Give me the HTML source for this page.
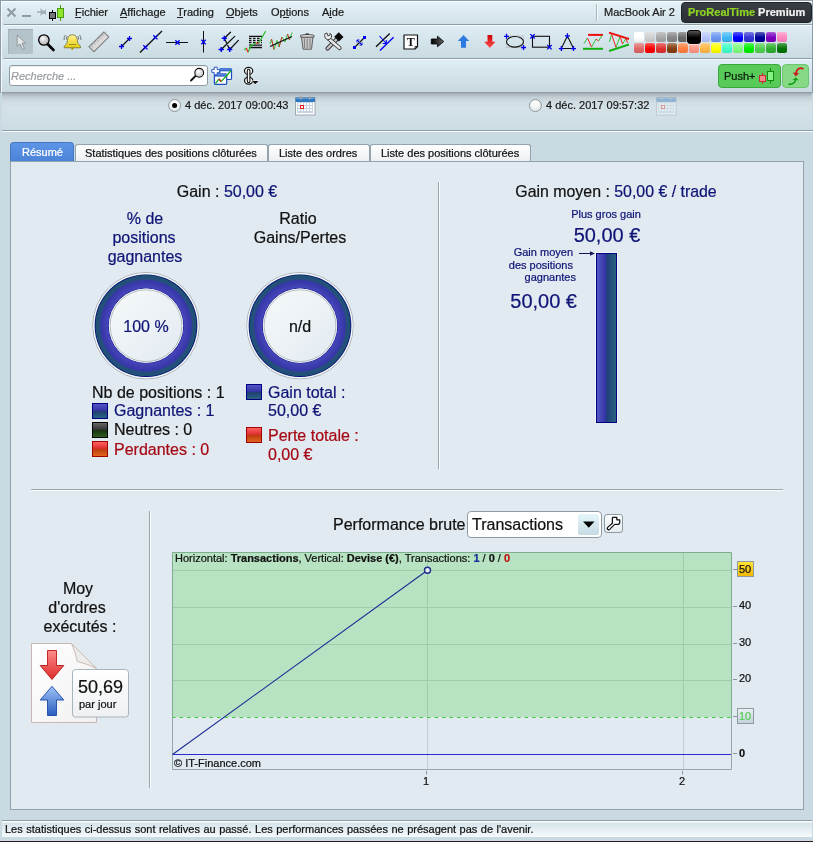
<!DOCTYPE html>
<html><head><meta charset="utf-8">
<style>
*{margin:0;padding:0;box-sizing:border-box}
html,body{width:813px;height:842px;overflow:hidden}
body{position:relative;background:#c9dae2;font-family:"Liberation Sans",sans-serif;color:#111}
.a{position:absolute}
.t{position:absolute;white-space:nowrap;line-height:1;will-change:transform;-webkit-text-stroke:0.22px currentColor}
.nv{color:#17237e}
.rd{color:#b0141a}
svg{position:absolute;overflow:visible}
</style></head><body>

<!-- window frame -->
<div class="a" style="left:0;top:0;width:813px;height:1px;background:#8d9ca4"></div>
<div class="a" style="left:0;top:0;width:1px;height:93px;background:#8d9ca4"></div>
<div class="a" style="left:1px;top:1px;width:1px;height:91px;background:#f6fafc"></div>

<!-- menubar -->
<div class="a" style="left:2px;top:1px;width:811px;height:25px;background:linear-gradient(#e5f3f9,#d0dfe5)"></div>
<div class="a" style="left:1px;top:1px;width:812px;height:1px;background:#fbfeff"></div>
<div class="a" style="left:4px;top:24px;width:809px;height:1px;background:#8e9ea5"></div>
<div class="a" style="left:4px;top:25px;width:809px;height:1px;background:#f4fafc"></div>

<!-- toolbar -->
<div class="a" style="left:2px;top:26px;width:811px;height:34px;background:linear-gradient(#deedf4,#c9d9e0)"></div>
<div class="a" style="left:4px;top:58px;width:809px;height:1px;background:#8e9ea5"></div>
<div class="a" style="left:4px;top:59px;width:809px;height:1px;background:#f4fafc"></div>

<!-- search row -->
<div class="a" style="left:2px;top:60px;width:811px;height:32px;background:linear-gradient(#dfeef5,#c8d8df)"></div>
<div class="a" style="left:2px;top:92px;width:810px;height:38px;background:linear-gradient(#8a979d 0px,#aab6bc 2px,#c2ced4 5px,#d0dde3 10px,#d4e2e8 16px,#d0dfe5 28px,#cbdbe2 38px)"></div>



<!-- menubar content -->
<svg style="left:0;top:0" width="70" height="24">
 <g stroke="#8e9ba1" stroke-width="2" fill="none"><path d="M7.5 8.5 L15.5 16.5 M15.5 8.5 L7.5 16.5"/></g>
 <rect x="22" y="15" width="9" height="2" fill="#8e9ba1"/>
 <path d="M37 11.2 H41 V12.8 H37 Z M40.5 8 L42.5 10.5 H45 L46 9 V15.8 L45 14 H42.5 L40.5 15.8 Z" fill="#a4aeb3"/>
 <line x1="52.5" y1="10" x2="52.5" y2="21" stroke="#000" stroke-width="1"/>
 <rect x="49.5" y="12.5" width="6" height="6" fill="#74787c" stroke="#000" stroke-width="1"/>
 <line x1="60.5" y1="5" x2="60.5" y2="21" stroke="#4a9c12" stroke-width="1"/>
 <rect x="57.5" y="8.5" width="6" height="9" fill="#8fe52c" stroke="#4a9c12" stroke-width="1"/>
</svg>
<div class="t" style="left:75px;top:7.1px;font-size:11px;color:#1a1a1a">Fichier</div>
<div class="t" style="left:120px;top:7.1px;font-size:11px;color:#1a1a1a">Affichage</div>
<div class="t" style="left:177px;top:7.1px;font-size:11px;color:#1a1a1a">Trading</div>
<div class="t" style="left:226px;top:7.1px;font-size:11px;color:#1a1a1a">Objets</div>
<div class="t" style="left:271px;top:7.1px;font-size:11px;color:#1a1a1a">Options</div>
<div class="t" style="left:322px;top:7.1px;font-size:11px;color:#1a1a1a">Aide</div>
<div class="a" style="left:75px;top:17px;width:6px;height:1px;background:#222"></div>
<div class="a" style="left:120px;top:17px;width:7px;height:1px;background:#222"></div>
<div class="a" style="left:177px;top:17px;width:6px;height:1px;background:#222"></div>
<div class="a" style="left:226px;top:17px;width:8px;height:1px;background:#222"></div>
<div class="a" style="left:283px;top:17px;width:6px;height:1px;background:#222"></div>
<div class="a" style="left:329px;top:17px;width:3px;height:1px;background:#222"></div>
<div class="a" style="left:596px;top:4px;width:1px;height:17px;background:#a9b6bc"></div>
<div class="a" style="left:597px;top:4px;width:1px;height:17px;background:#f4f9fb"></div>
<div class="t" style="left:604px;top:7.4px;font-size:11px;color:#1a1a1a">MacBook Air 2</div>
<div class="a" style="left:681px;top:2px;width:131px;height:21px;border-radius:4px;background:linear-gradient(#3a3f45,#2a2e33);border:1px solid #1e2226"></div>
<div class="t" style="left:688px;top:6.6px;font-size:11px;font-weight:bold;color:#8fd424">ProRealTime <span style="color:#f2f2f2">Premium</span></div>


<!-- toolbar icons -->
<div class="a" style="left:8px;top:29px;width:25px;height:25px;background:#b4c3ca;border-top:1px solid #a0afb6;border-left:1px solid #a6b5bc"></div>
<svg style="left:0;top:0" width="813" height="60">
 <defs>
  <radialGradient id="mg" cx="0.4" cy="0.35" r="0.7"><stop offset="0" stop-color="#fafafa"/><stop offset="1" stop-color="#a8a8a8"/></radialGradient>
  <linearGradient id="bellg" x1="0" y1="0" x2="0" y2="1"><stop offset="0" stop-color="#fff59a"/><stop offset="1" stop-color="#e8cc00"/></linearGradient>
  <linearGradient id="arrg" x1="0" y1="0" x2="1" y2="0"><stop offset="0" stop-color="#000"/><stop offset="1" stop-color="#666"/></linearGradient>
  <linearGradient id="redg" x1="0" y1="0" x2="0" y2="1"><stop offset="0" stop-color="#c00"/><stop offset="1" stop-color="#ff5050"/></linearGradient>
 </defs>
 <!-- cursor -->
 <path d="M17.2 35 L17.2 46.5 L20 44 L22.5 49.5 L24.5 48.5 L22 43.2 L25.5 43 Z" fill="#e4e6e8" stroke="#8a9094" stroke-width="0.9" stroke-linejoin="round"/>
 <!-- magnifier -->
 <line x1="47.5" y1="44" x2="53.5" y2="50" stroke="#000" stroke-width="2.6" stroke-linecap="round"/>
 <circle cx="43.9" cy="40" r="5.2" fill="url(#mg)" stroke="#000" stroke-width="1.3"/>
 <!-- bell -->
 <g stroke="#6a6a6a" stroke-width="0.9" fill="none"><path d="M65.5 35 Q63.5 37 64.2 40 M67.3 36 Q66 37.5 66.5 39.5 M79.5 35 Q81.5 37 80.8 40 M77.7 36 Q79 37.5 78.5 39.5"/></g>
 <path d="M72.4 34.8 Q77.3 35 77.3 40.5 Q77.3 44 80.5 46.3 L80.5 47.8 L64.3 47.8 L64.3 46.3 Q67.5 44 67.5 40.5 Q67.5 35 72.4 34.8 Z" fill="url(#bellg)" stroke="#6b6b3a" stroke-width="0.8"/>
 <line x1="69" y1="44.5" x2="76" y2="44.5" stroke="#6b6b3a" stroke-width="0.7"/>
 <rect x="71.3" y="47.8" width="2" height="1.8" fill="#a09000"/>
 <!-- ruler -->
 <g transform="translate(98.9,41.9) rotate(-45)">
  <rect x="-10.5" y="-3.5" width="21" height="7" fill="#dadada" stroke="#7a7a7a" stroke-width="1"/>
  <g stroke="#8a8a8a" stroke-width="0.7"><path d="M-8 -3.5 V-0.5 M-6 -3.5 V-1.5 M-4 -3.5 V-0.5 M-2 -3.5 V-1.5 M0 -3.5 V-0.5 M2 -3.5 V-1.5 M4 -3.5 V-0.5 M6 -3.5 V-1.5 M8 -3.5 V-0.5"/></g>
 </g>
 <!-- line segment -->
 <line x1="121.5" y1="46.5" x2="129.5" y2="38.5" stroke="#111" stroke-width="1.3"/>
 <g stroke="#0000ee" stroke-width="1.3"><path d="M119 46.5 H124 M121.5 44 V49 M127 38.5 H132 M129.5 36 V41"/></g>
 <!-- long line -->
 <line x1="140" y1="52.5" x2="162" y2="31" stroke="#111" stroke-width="1.35"/>
 <g stroke="#0000ee" stroke-width="1.3"><path d="M143.3 45.2 L147.5 49.4 M143.3 49.4 L147.5 45.2 M153.3 35.2 L157.5 39.4 M153.3 39.4 L157.5 35.2"/></g>
 <!-- horizontal line -->
 <line x1="166" y1="42.5" x2="188" y2="42.5" stroke="#111" stroke-width="1"/>
 <g stroke="#0000ee" stroke-width="1.3"><path d="M175.4 40.3 L179.6 44.7 M175.4 44.7 L179.6 40.3"/></g>
 <!-- vertical line -->
 <line x1="203.5" y1="31" x2="203.5" y2="52.5" stroke="#111" stroke-width="1"/>
 <g stroke="#0000ee" stroke-width="1.3"><path d="M201.3 39.8 L205.7 44.2 M201.3 44.2 L205.7 39.8"/></g>
 <!-- pitchfork -->
 <g stroke="#111" stroke-width="1.3" stroke-linecap="round"><path d="M224.3 38.3 L230.5 32.3 M221.2 49.5 L234.7 36.4 M229.7 49.5 L238.4 40.4 M224.3 38.3 L229.7 49.5"/></g>
 <g stroke="#0000ee" stroke-width="1.4"><path d="M221.7 38.3 H226.9 M224.3 35.7 V40.9 M218.6 49.5 H223.8 M221.2 46.9 V52.1 M227.1 49.5 H232.3 M229.7 46.9 V52.1"/></g>
 <!-- fib -->
 <g stroke="#111" stroke-width="1.3"><path d="M249 36.4 H262 M249 45.2 H262 M249 47.5 H262"/></g>
 <g stroke="#111" stroke-width="1.3" stroke-dasharray="2.5 1.5"><path d="M249 38.4 H262 M249 40.5 H262 M249 42.7 H262"/></g>
 <path d="M244.3 50 L246.3 48 M248 52.3 L251.2 45.5 L256 43 M258.5 43.3 L265.7 31.1" fill="none" stroke="#2ec02e" stroke-width="1.2"/>
 <path d="M246.3 48 L248 52.3 M256 43 L258.5 43.3" fill="none" stroke="#ee2020" stroke-width="1.2"/>
 <!-- wave -->
 <path d="M270 44 L271.5 39 L274 49.5 L277 40.5 L279 47 L282 37 L285 42 L287.5 34 L289.5 40 L292 32.5" fill="none" stroke="#30c030" stroke-width="1"/>
 <path d="M271.5 39 L274 49.5 M279 47 L282 37 M287.5 34 L289.5 40" fill="none" stroke="#e03030" stroke-width="1"/>
 <line x1="270" y1="46.5" x2="292" y2="36.5" stroke="#111" stroke-width="1.35"/>
 <!-- trash -->
 <path d="M301.5 37 L303 49.2 L311.5 49.2 L313 37 Z" fill="#c8c8c8" stroke="#505050" stroke-width="0.9"/>
 <g stroke="#707070" stroke-width="0.8"><path d="M304.5 38.5 V48 M307.2 38.5 V48.2 M310 38.5 V48"/></g>
 <path d="M300.5 35.3 Q307.2 33 314 35.3 L314 37.2 L300.5 37.2 Z" fill="#d8d8d8" stroke="#505050" stroke-width="0.9"/>
 <rect x="305.7" y="33.5" width="3" height="1.5" fill="#333"/>
 <!-- tools -->
 <line x1="336.5" y1="39.5" x2="327.5" y2="48.5" stroke="#333" stroke-width="4.2" stroke-linecap="round"/>
 <line x1="336.5" y1="39.5" x2="327.5" y2="48.5" stroke="#c8c8c8" stroke-width="2.4" stroke-linecap="round"/>
 <line x1="329" y1="39" x2="339.5" y2="48" stroke="#333" stroke-width="4.2" stroke-linecap="round"/>
 <line x1="329" y1="39" x2="339.5" y2="48" stroke="#e8e8e8" stroke-width="2.4" stroke-linecap="round"/>
 <path d="M324.5 35.5 Q324.5 33 327 33 L327.8 35.8 L330 35.2 L330 33.2 Q332.2 34.2 331.5 37.3 Q330.5 40 327.5 39.8 Q324.8 39 324.5 35.5 Z" fill="#e8e8e8" stroke="#333" stroke-width="0.9"/>
 <path d="M334.2 36.8 L338.8 32.2 L343.5 36.9 L338.9 41.5 Z" fill="#0a0a0a"/>
 <!-- blue squares line -->
 <line x1="354.5" y1="47.5" x2="364.5" y2="37.5" stroke="#111" stroke-width="1.3"/>
 <rect x="353" y="46" width="3" height="3" fill="#0000ee"/>
 <rect x="363" y="36" width="3" height="3" fill="#0000ee"/>
 <g stroke="#0000ee" stroke-width="1"><path d="M357 40 L362 45 M357 40 H359.5 M357 40 V42.5 M362 45 H359.5 M362 45 V42.5"/></g>
 <!-- parallel lines -->
 <line x1="376" y1="46.7" x2="389.7" y2="33.4" stroke="#111" stroke-width="1.35"/>
 <line x1="380" y1="50.6" x2="393.6" y2="37.3" stroke="#0000ee" stroke-width="1.35"/>
 <g stroke="#0000ee" stroke-width="1.1" fill="none"><path d="M379.5 36 L386.3 43.5 M386.3 43.5 L386.3 40 M386.3 43.5 L382.7 43.5"/></g>
 <!-- text T -->
 <path d="M404 35 H417.5 V46.5 L415 49 H404 Z" fill="#fff" stroke="#111" stroke-width="1.2" stroke-linejoin="round"/>
 <path d="M415 49 V46.5 H417.5" fill="none" stroke="#111" stroke-width="0.8"/>
 <text x="410.8" y="45.8" font-family="Liberation Serif" font-weight="bold" font-size="12" text-anchor="middle" fill="#111">T</text>
 <!-- black arrow -->
 <path d="M431.3 39 H437.5 V36.2 L443.8 41.5 L437.5 46.8 V44 H431.3 Z" fill="url(#arrg)" stroke="#000" stroke-width="0.8"/>
 <!-- blue arrow up -->
 <path d="M463.5 35 L469.2 41 H466 V47.8 H461 V41 H457.8 Z" fill="#2d7ae0"/>
 <!-- red arrow down -->
 <path d="M487.5 35 H492.3 V41.8 H495.4 L489.9 47.9 L484.2 41.8 H487.5 Z" fill="url(#redg)"/>
 <!-- ellipse -->
 <rect x="506.5" y="36" width="17" height="11.5" fill="none" stroke="#b0b0b0" stroke-width="0.6"/>
 <ellipse cx="515" cy="41.8" rx="8.5" ry="5.3" fill="none" stroke="#111" stroke-width="1.1"/>
 <g stroke="#0000ee" stroke-width="1.3"><path d="M504 36.3 H509 M506.5 33.8 V38.8 M521 47.5 H526 M523.5 45 V50"/></g>
 <!-- rectangle -->
 <rect x="532.5" y="36.3" width="17" height="10.9" fill="none" stroke="#111" stroke-width="1.1"/>
 <g stroke="#0000ee" stroke-width="1.3"><path d="M530.3 34.1 L534.7 38.5 M530.3 38.5 L534.7 34.1 M547.3 45 L551.7 49.4 M547.3 49.4 L551.7 45"/></g>
 <!-- triangle -->
 <path d="M567.4 36 L561.3 48.5 H573.5 Z" fill="none" stroke="#111" stroke-width="1.1"/>
 <g stroke="#0000ee" stroke-width="1.3"><path d="M564.9 35.8 H569.9 M567.4 33.3 V38.3 M558.8 48.6 H563.8 M561.3 46.1 V51.1 M571 48.6 H576 M573.5 46.1 V51.1"/></g>
 <!-- channel rect -->
 <rect x="588" y="33.9" width="15" height="2" fill="#ee1010"/>
 <rect x="583" y="47.8" width="20" height="2" fill="#10b010"/>
 <path d="M584 43.5 L587.5 38 M591.5 47 L596 39 M598.5 41 L602 35.5" stroke="#30c030" stroke-width="1" fill="none"/>
 <path d="M587.5 38 L591.5 47 M596 39 L598.5 41" stroke="#ee2020" stroke-width="1" fill="none"/>
 <!-- channel triangle -->
 <path d="M609 32.6 L629 39" stroke="#ee1010" stroke-width="2"/>
 <path d="M609 51 L629 44.5" stroke="#10b010" stroke-width="2"/>
 <path d="M609.5 42 L611.5 34 M616 47.5 L620 36.5 M622.5 44 L626 38.5" stroke="#30c030" stroke-width="1" fill="none"/>
 <path d="M611.5 34 L616 47.5 M620 36.5 L622.5 44 M626 38.5 L627.5 43" stroke="#ee2020" stroke-width="1" fill="none"/>
</svg>

<!-- palette -->
<div class="a" style="left:634px;top:32px;width:10px;height:10px;border-radius:2px;background:linear-gradient(#ffffff,#ffffff 55%,#eaeaea)"></div>
<div class="a" style="left:645px;top:32px;width:10px;height:10px;border-radius:2px;background:linear-gradient(#e0e0e0,#d0d0d0 55%,#bfbfbf)"></div>
<div class="a" style="left:656px;top:32px;width:10px;height:10px;border-radius:2px;background:linear-gradient(#c6c6c6,#a8a8a8 55%,#9a9a9a)"></div>
<div class="a" style="left:667px;top:32px;width:10px;height:10px;border-radius:2px;background:linear-gradient(#b1b1b1,#888888 55%,#7d7d7d)"></div>
<div class="a" style="left:678px;top:32px;width:10px;height:10px;border-radius:2px;background:linear-gradient(#9e9e9e,#6a6a6a 55%,#616161)"></div>
<div class="a" style="left:700px;top:32px;width:10px;height:10px;border-radius:2px;background:linear-gradient(#d0d9ff,#b8c6ff 55%,#a9b6ea)"></div>
<div class="a" style="left:711px;top:32px;width:10px;height:10px;border-radius:2px;background:linear-gradient(#9fbcf5,#6c98f0 55%,#638bdc)"></div>
<div class="a" style="left:722px;top:32px;width:10px;height:10px;border-radius:2px;background:linear-gradient(#82d0fa,#40b8f8 55%,#3aa9e4)"></div>
<div class="a" style="left:733px;top:32px;width:10px;height:10px;border-radius:2px;background:linear-gradient(#5959ff,#0000ff 55%,#0000ea)"></div>
<div class="a" style="left:744px;top:32px;width:10px;height:10px;border-radius:2px;background:linear-gradient(#7c7ce3,#3636d4 55%,#3131c3)"></div>
<div class="a" style="left:755px;top:32px;width:10px;height:10px;border-radius:2px;background:linear-gradient(#5959bc,#000098 55%,#00008b)"></div>
<div class="a" style="left:766px;top:32px;width:10px;height:10px;border-radius:2px;background:linear-gradient(#ab59d6,#7e00c0 55%,#7300b0)"></div>
<div class="a" style="left:777px;top:32px;width:10px;height:10px;border-radius:2px;background:linear-gradient(#ffb1d6,#ff88c0 55%,#ea7db0)"></div>
<div class="a" style="left:634px;top:43px;width:10px;height:10px;border-radius:2px;background:linear-gradient(#ea9c9c,#e06868 55%,#ce5f5f)"></div>
<div class="a" style="left:645px;top:43px;width:10px;height:10px;border-radius:2px;background:linear-gradient(#ff5959,#ff0000 55%,#ea0000)"></div>
<div class="a" style="left:656px;top:43px;width:10px;height:10px;border-radius:2px;background:linear-gradient(#ea7979,#e03232 55%,#ce2e2e)"></div>
<div class="a" style="left:667px;top:43px;width:10px;height:10px;border-radius:2px;background:linear-gradient(#af8263,#844010 55%,#793a0e)"></div>
<div class="a" style="left:678px;top:43px;width:10px;height:10px;border-radius:2px;background:linear-gradient(#ffac82,#ff8040 55%,#ea753a)"></div>
<div class="a" style="left:689px;top:43px;width:10px;height:10px;border-radius:2px;background:linear-gradient(#ffbcb1,#ff9888 55%,#ea8b7d)"></div>
<div class="a" style="left:700px;top:43px;width:10px;height:10px;border-radius:2px;background:linear-gradient(#ffd088,#ffb848 55%,#eaa942)"></div>
<div class="a" style="left:711px;top:43px;width:10px;height:10px;border-radius:2px;background:linear-gradient(#ffff59,#ffff00 55%,#eaea00)"></div>
<div class="a" style="left:722px;top:43px;width:10px;height:10px;border-radius:2px;background:linear-gradient(#82ffdb,#40ffc8 55%,#3aeab8)"></div>
<div class="a" style="left:733px;top:43px;width:10px;height:10px;border-radius:2px;background:linear-gradient(#acffac,#80ff80 55%,#75ea75)"></div>
<div class="a" style="left:744px;top:43px;width:10px;height:10px;border-radius:2px;background:linear-gradient(#59f559,#00f000 55%,#00dc00)"></div>
<div class="a" style="left:755px;top:43px;width:10px;height:10px;border-radius:2px;background:linear-gradient(#8de08d,#50d050 55%,#49bf49)"></div>
<div class="a" style="left:766px;top:43px;width:10px;height:10px;border-radius:2px;background:linear-gradient(#78cb78,#30b030 55%,#2ca12c)"></div>
<div class="a" style="left:777px;top:43px;width:10px;height:10px;border-radius:2px;background:linear-gradient(#59a459,#007400 55%,#006a00)"></div>
<div class="a" style="left:687px;top:30px;width:14px;height:14px;border-radius:3px;background:linear-gradient(#555,#000 55%,#000);border:1px solid #000;box-shadow:0 0 0 1px rgba(255,255,255,.5)"></div>

<!-- search row content -->
<div class="a" style="left:9px;top:65px;width:199px;height:21px;border-radius:3px;background:#fff;border:1px solid #8e9ba2;box-shadow:inset 0 1px 1px rgba(0,0,0,.08)"></div>
<div class="t" style="left:11px;top:71px;font-size:11px;font-style:italic;color:#999ca0">Recherche ...</div>
<svg style="left:0;top:0" width="813" height="95">
 <defs>
  <radialGradient id="mg2" cx="0.4" cy="0.35" r="0.7"><stop offset="0" stop-color="#ffffff"/><stop offset="1" stop-color="#c0c0c0"/></radialGradient>
  <linearGradient id="wtb" x1="0" y1="0" x2="0" y2="1"><stop offset="0" stop-color="#6d9ae8"/><stop offset="1" stop-color="#1d4fc0"/></linearGradient>
 </defs>
 <line x1="191" y1="80.5" x2="196" y2="75.5" stroke="#111" stroke-width="1.8" stroke-linecap="round"/>
 <circle cx="199.2" cy="72.8" r="4.4" fill="url(#mg2)" stroke="#111" stroke-width="1.1"/>
 <!-- windows icon -->
 <rect x="219.8" y="68.5" width="11.7" height="11" rx="1" fill="#fff" stroke="#1a4dc0" stroke-width="1.2"/>
 <rect x="219.8" y="68.5" width="11.7" height="2.8" fill="url(#wtb)"/>
 <rect x="214.4" y="73.8" width="12.3" height="10.5" rx="1" fill="#fff" stroke="#1a4dc0" stroke-width="1.2"/>
 <rect x="214.4" y="73.8" width="12.3" height="2.8" fill="url(#wtb)"/>
 <path d="M215.5 83.5 L219 79 L221 81.5 L226 76.5 M226 76.5 L231 70.5" fill="none" stroke="#20b020" stroke-width="1.3"/>
 <path d="M219 79 L221 81.5" stroke="#e02020" stroke-width="1.3"/>
 <path d="M214.2 67.2 H217.2 V69.6 H219.6 V72.4 H217.2 V74.8 H214.2 V72.4 H211.8 V69.6 H214.2 Z" fill="#fff" stroke="#1a4dc0" stroke-width="0.9"/>
 <!-- chain -->
 <ellipse cx="248.6" cy="70.9" rx="4.1" ry="3.5" fill="#fff" stroke="#111" stroke-width="1.25"/>
 <ellipse cx="248.6" cy="80.6" rx="4.1" ry="3.5" fill="#fff" stroke="#111" stroke-width="1.25"/>
 <rect x="247.3" y="69.3" width="2.6" height="13.2" rx="1.3" fill="#fff" stroke="#111" stroke-width="1.1"/>
 
 <path d="M251.3 80.4 H259.2 L255.25 84.8 Z" fill="#fff"/>
 <path d="M252 81 H258.5 L255.25 84.2 Z" fill="#111"/>
</svg>
<div class="a" style="left:718px;top:64px;width:63px;height:24px;border-radius:4px;background:#58ca58;border:1px solid #3aa83a"></div>
<div class="t" style="left:724px;top:70.5px;font-size:11px;color:#0a1a0a">Push+</div>
<svg style="left:0;top:0" width="813" height="95">
 <line x1="762.5" y1="73" x2="762.5" y2="84" stroke="#c8283a" stroke-width="1"/>
 <rect x="759.5" y="75.5" width="6" height="6" fill="#f88c8c" stroke="#c8283a" stroke-width="1"/>
 <line x1="770.5" y1="68" x2="770.5" y2="83.5" stroke="#0e8a0e" stroke-width="1"/>
 <rect x="767.5" y="71.5" width="6" height="9" fill="#86f286" stroke="#0e8a0e" stroke-width="1"/>
</svg>
<div class="a" style="left:782px;top:64px;width:27px;height:24px;border-radius:4px;background:#86da86;border:1px solid #6cc46c"></div>
<svg style="left:0;top:0" width="813" height="95">
 <path d="M802.8 68.6 C799.5 67.2 796.3 69.5 795.9 73.2" fill="none" stroke="#d81818" stroke-width="1.9" stroke-linecap="round"/>
 <path d="M792.8 72.4 L799.2 72.9 L795.7 76.6 Z" fill="#c42020"/>
 <path d="M789 84.4 C792.6 84.3 795.3 82.2 795.8 79" fill="none" stroke="#10a010" stroke-width="1.6" stroke-linecap="round"/>
 <path d="M792.6 80 L798.6 80.2 L795.8 77.6 Z" fill="#129a12"/>
</svg>
<div class="a" style="left:812px;top:0;width:1px;height:93px;background:#8d9ca4"></div>

<!-- separator under dates -->
<div class="a" style="left:2px;top:130px;width:811px;height:1px;background:#8e9ea5"></div>
<div class="a" style="left:2px;top:131px;width:811px;height:1px;background:#f6fbfd"></div>


<!-- dates row -->
<svg style="left:0;top:0" width="813" height="170">
 <defs>
  <radialGradient id="rad" cx="0.5" cy="0.3" r="0.7"><stop offset="0" stop-color="#ffffff"/><stop offset="1" stop-color="#e4e8ea"/></radialGradient>
 </defs>
 <circle cx="174.6" cy="105.5" r="6" fill="url(#rad)" stroke="#8a979d" stroke-width="1"/>
 <circle cx="174.6" cy="105.5" r="2.5" fill="#000"/>
 <circle cx="535.4" cy="105.5" r="6" fill="url(#rad)" stroke="#8a979d" stroke-width="1"/>
 <!-- calendar 1 -->
 <g transform="translate(295,95)">
  <rect x="0.5" y="2.5" width="19.5" height="17.5" fill="#fff" stroke="#a0a8ac" stroke-width="1"/>
  <rect x="0.5" y="2.5" width="19.5" height="4.5" fill="#2f78c0"/><rect x="1" y="3" width="18.5" height="1" fill="#5c9ad4"/>
  <rect x="5" y="0.5" width="1.6" height="4" fill="#a8a8a8"/>
  <rect x="14" y="0.5" width="1.6" height="4" fill="#a8a8a8"/>
  <rect x="2" y="7" width="16" height="11" fill="#c4d4e2"/>
  <g fill="#fff"><rect x="3" y="8" width="2" height="2"/><rect x="3" y="11" width="2" height="2"/><rect x="3" y="14" width="2" height="2"/><rect x="6" y="8" width="2" height="2"/><rect x="6" y="11" width="2" height="2"/><rect x="6" y="14" width="2" height="2"/><rect x="9" y="8" width="2" height="2"/><rect x="9" y="11" width="2" height="2"/><rect x="9" y="14" width="2" height="2"/><rect x="12" y="8" width="2" height="2"/><rect x="12" y="11" width="2" height="2"/><rect x="12" y="14" width="2" height="2"/><rect x="15" y="8" width="2" height="2"/><rect x="15" y="11" width="2" height="2"/><rect x="15" y="14" width="2" height="2"/></g>
  <rect x="5.5" y="10.5" width="3" height="3" fill="#fff" stroke="#e82020" stroke-width="1"/>
 </g>
 <g transform="translate(656,95)" opacity="0.38">
  <rect x="0.5" y="2.5" width="19.5" height="17.5" fill="#fff" stroke="#a0a8ac" stroke-width="1"/>
  <rect x="0.5" y="2.5" width="19.5" height="4.5" fill="#2f78c0"/><rect x="1" y="3" width="18.5" height="1" fill="#5c9ad4"/>
  <rect x="5" y="0.5" width="1.6" height="4" fill="#a8a8a8"/>
  <rect x="14" y="0.5" width="1.6" height="4" fill="#a8a8a8"/>
  <rect x="2" y="7" width="16" height="11" fill="#c4d4e2"/>
  <g fill="#fff"><rect x="3" y="8" width="2" height="2"/><rect x="3" y="11" width="2" height="2"/><rect x="3" y="14" width="2" height="2"/><rect x="6" y="8" width="2" height="2"/><rect x="6" y="11" width="2" height="2"/><rect x="6" y="14" width="2" height="2"/><rect x="9" y="8" width="2" height="2"/><rect x="9" y="11" width="2" height="2"/><rect x="9" y="14" width="2" height="2"/><rect x="12" y="8" width="2" height="2"/><rect x="12" y="11" width="2" height="2"/><rect x="12" y="14" width="2" height="2"/><rect x="15" y="8" width="2" height="2"/><rect x="15" y="11" width="2" height="2"/><rect x="15" y="14" width="2" height="2"/></g>
  <rect x="5.5" y="10.5" width="3" height="3" fill="#fff" stroke="#e82020" stroke-width="1"/>
 </g>
</svg>
<div class="t" style="left:185px;top:100px;font-size:11px;color:#1a1a1a">4 déc. 2017 09:00:43</div>
<div class="t" style="left:546px;top:100px;font-size:11px;color:#1a1a1a">4 déc. 2017 09:57:32</div>

<!-- tabs -->
<div class="a" style="left:10px;top:142px;width:64px;height:20px;border-radius:4px 4px 0 0;background:linear-gradient(#5e95e6,#4a82d8);border:1px solid #4476c4;border-bottom:none"></div>
<div class="t" style="left:22px;top:146.5px;font-size:11px;color:#fff">Résumé</div>
<div class="a" style="left:75px;top:144px;width:193px;height:17px;border-radius:3px 3px 0 0;background:linear-gradient(#ffffff,#eceff1);border:1px solid #93a3ab;border-bottom:none"></div>
<div class="t" style="left:85px;top:147.5px;font-size:11px;color:#111">Statistiques des positions clôturées</div>
<div class="a" style="left:268px;top:144px;width:102px;height:17px;border-radius:3px 3px 0 0;background:linear-gradient(#ffffff,#eceff1);border:1px solid #93a3ab;border-bottom:none"></div>
<div class="t" style="left:279px;top:147.5px;font-size:11px;color:#111">Liste des ordres</div>
<div class="a" style="left:370px;top:144px;width:161px;height:17px;border-radius:3px 3px 0 0;background:linear-gradient(#ffffff,#eceff1);border:1px solid #93a3ab;border-bottom:none"></div>
<div class="t" style="left:381px;top:147.5px;font-size:11px;color:#111">Liste des positions clôturées</div>

<!-- panel -->
<div class="a" style="left:10px;top:161px;width:794px;height:649px;background:#e2eaf1;border:1px solid #93a3ab"></div>

<!-- upper content -->
<div class="t" style="left:77px;width:300px;text-align:center;top:184.00px;font-size:16px;color:#111">Gain : <span style="color:#0f1476">50,00 €</span></div>
<div class="t" style="left:-5.5px;width:300px;text-align:center;top:211.00px;font-size:16px;color:#0f1476">% de</div>
<div class="t" style="left:-6px;width:300px;text-align:center;top:230.00px;font-size:16px;color:#0f1476">positions</div>
<div class="t" style="left:-5px;width:300px;text-align:center;top:249.00px;font-size:16px;color:#0f1476">gagnantes</div>
<div class="t" style="left:147.60000000000002px;width:300px;text-align:center;top:211.00px;font-size:16px;color:#111">Ratio</div>
<div class="t" style="left:150px;width:300px;text-align:center;top:230.00px;font-size:16px;color:#111">Gains/Pertes</div>
<svg style="left:0;top:0" width="813" height="842">
 <defs>
  <radialGradient id="ring" gradientUnits="userSpaceOnUse" cx="0" cy="0" r="50.6">
   <stop offset="0.73" stop-color="#000078"/>
   <stop offset="0.75" stop-color="#4646ba"/>
   <stop offset="0.89" stop-color="#3636a8"/>
   <stop offset="0.915" stop-color="#284c82"/>
   <stop offset="1" stop-color="#1c5470"/>
  </radialGradient>
  <linearGradient id="hole" x1="0" y1="0" x2="1" y2="1"><stop offset="0" stop-color="#f6f9fb"/><stop offset="1" stop-color="#e2eaf0"/></linearGradient>
 </defs>
 <g id="dn" transform="translate(146,325.7)">
  <circle r="53.2" fill="none" stroke="#a0aaaf" stroke-width="0.9"/>
  <circle r="52.3" fill="none" stroke="#fafcfd" stroke-width="0.9"/>
  <circle r="51.3" fill="#000078"/>
  <circle r="50.6" fill="url(#ring)"/>
  <circle r="37.1" fill="url(#hole)"/>
  <circle r="36.7" fill="none" stroke="#fbfdfe" stroke-width="0.8"/>
  <circle r="35.9" fill="none" stroke="#a4aeb3" stroke-width="0.8"/>
 </g>
 <g transform="translate(300,325.7)">
  <circle r="53.2" fill="none" stroke="#a0aaaf" stroke-width="0.9"/>
  <circle r="52.3" fill="none" stroke="#fafcfd" stroke-width="0.9"/>
  <circle r="51.3" fill="#000078"/>
  <circle r="50.6" fill="url(#ring)"/>
  <circle r="37.1" fill="url(#hole)"/>
  <circle r="36.7" fill="none" stroke="#fbfdfe" stroke-width="0.8"/>
  <circle r="35.9" fill="none" stroke="#a4aeb3" stroke-width="0.8"/>
 </g>
</svg>
<div class="t" style="left:-4.300000000000011px;width:300px;text-align:center;top:319.00px;font-size:16px;color:#0f1476">100 %</div>
<div class="t" style="left:150px;width:300px;text-align:center;top:319.00px;font-size:16px;color:#111">n/d</div>
<div class="t" style="left:92px;top:385.00px;font-size:16px;color:#111">Nb de positions : 1</div>
<div class="a" style="left:92px;top:403px;width:16px;height:16px;background:linear-gradient(#5454c4,#3232a2 50%,#203e70 50%,#2a6282);border:1px solid #000080"></div>
<div class="a" style="left:92px;top:422px;width:16px;height:16px;background:linear-gradient(#666,#303030 50%,#183010 50%,#30601e);border:1px solid #000"></div>
<div class="a" style="left:92px;top:441px;width:16px;height:16px;background:linear-gradient(#ff6060,#d82a2a 50%,#bc3a0e 50%,#e0641c);border:1px solid #a00000"></div>
<div class="t" style="left:114px;top:403.00px;font-size:16px;color:#0f1476">Gagnantes : 1</div>
<div class="t" style="left:114px;top:422.00px;font-size:16px;color:#111">Neutres : 0</div>
<div class="t" style="left:114px;top:442.00px;font-size:16px;color:#a50a14">Perdantes : 0</div>
<div class="a" style="left:246px;top:384px;width:16px;height:16px;background:linear-gradient(#5454c4,#3232a2 50%,#203e70 50%,#2a6282);border:1px solid #000080"></div>
<div class="a" style="left:246px;top:427px;width:16px;height:16px;background:linear-gradient(#ff6060,#d82a2a 50%,#bc3a0e 50%,#e0641c);border:1px solid #a00000"></div>
<div class="t" style="left:268px;top:385.00px;font-size:16px;color:#0f1476">Gain total :</div>
<div class="t" style="left:268px;top:403.00px;font-size:16px;color:#0f1476">50,00 €</div>
<div class="t" style="left:268px;top:428.00px;font-size:16px;color:#a50a14">Perte totale :</div>
<div class="t" style="left:268px;top:447.00px;font-size:16px;color:#a50a14">0,00 €</div>
<div class="a" style="left:438px;top:182px;width:1px;height:287px;background:#98a6ad"></div>
<div class="a" style="left:439px;top:182px;width:1px;height:287px;background:#fafdff"></div>
<div class="a" style="left:31px;top:489px;width:752px;height:1px;background:#98a6ad"></div>
<div class="a" style="left:31px;top:490px;width:752px;height:1px;background:#fafdff"></div>
<div class="t" style="left:466px;width:300px;text-align:center;top:184.00px;font-size:15.9px;color:#111">Gain moyen : <span style="color:#0f1476">50,00 € / trade</span></div>
<div class="t" style="left:456.29999999999995px;width:300px;text-align:center;top:209.00px;font-size:11px;color:#0f1476">Plus gros gain</div>
<div class="t" style="left:457px;width:300px;text-align:center;top:225.00px;font-size:20px;color:#0f1476">50,00 €</div>
<div class="t" style="left:273px;width:300px;text-align:right;top:247.00px;font-size:11px;color:#0f1476">Gain moyen</div>
<div class="t" style="left:273px;width:300px;text-align:right;top:260.00px;font-size:11px;color:#0f1476">des positions</div>
<div class="t" style="left:275.5px;width:300px;text-align:right;top:272.00px;font-size:11px;color:#0f1476">gagnantes</div>
<div class="t" style="left:276.5px;width:300px;text-align:right;top:291.00px;font-size:20px;color:#0f1476">50,00 €</div>
<svg style="left:0;top:0" width="813" height="842">
 <line x1="579" y1="253.5" x2="593" y2="253.5" stroke="#10185a" stroke-width="1"/>
 <path d="M595 253.5 L590 251.3 L590 255.7 Z" fill="#10185a"/>
</svg>
<div class="a" style="left:595px;top:252px;width:23px;height:171px;background:rgba(255,255,255,.6)"></div>
<div class="a" style="left:596px;top:252.5px;width:21px;height:170px;border:1px solid #000080;background:linear-gradient(90deg,#5058c4,#3434a4 45%,#1e3c7c 46%,#2a6280)"></div>
<!-- /upper -->
<!-- lower content -->
<div class="t" style="left:-72.2px;width:300px;text-align:center;top:581px;font-size:16px;color:#111">Moy</div>
<div class="t" style="left:-72.8px;width:300px;text-align:center;top:600px;font-size:16px;color:#111">d'ordres</div>
<div class="t" style="left:-69.8px;width:300px;text-align:center;top:619px;font-size:16px;color:#111">exécutés :</div>
<div class="a" style="left:149px;top:511px;width:1px;height:277px;background:#98a6ad"></div>
<div class="a" style="left:150px;top:511px;width:1px;height:277px;background:#fafdff"></div>
<svg style="left:0;top:0" width="813" height="842">
 <defs>
  <linearGradient id="docg" x1="0" y1="0" x2="1" y2="1"><stop offset="0" stop-color="#ffffff"/><stop offset="1" stop-color="#f0f0f0"/></linearGradient>
  <linearGradient id="dred" x1="0" y1="0" x2="0" y2="1"><stop offset="0" stop-color="#ff8c8c"/><stop offset="1" stop-color="#dc2a2a"/></linearGradient>
  <linearGradient id="dblue" x1="0" y1="0" x2="0" y2="1"><stop offset="0" stop-color="#a0c4f6"/><stop offset="1" stop-color="#2a5cc0"/></linearGradient>
  <linearGradient id="lbl" x1="0" y1="0" x2="0" y2="1"><stop offset="0" stop-color="#ffffff"/><stop offset="1" stop-color="#eef0f2"/></linearGradient>
 </defs>
 <path d="M31.5 643.5 H71.5 L96.5 668.5 V722.5 H31.5 Z" fill="url(#docg)" stroke="#c8b8b0" stroke-width="1"/>
 <path d="M71.5 643.5 Q75.5 652 77.3 661.5 Q87 663.5 96.5 668.5 Z" fill="#ececec" stroke="#c8b4ac" stroke-width="0.9" stroke-linejoin="round"/>
 <path d="M47.5 650.5 H56.5 V665.5 H63.8 L52 679.5 L40.2 665.5 H47.5 Z" fill="url(#dred)" stroke="#b81818" stroke-width="0.9"/>
 <path d="M52 686.3 L63.8 700 H56.5 V715.5 H47.5 V700 H40.2 Z" fill="url(#dblue)" stroke="#1a48a8" stroke-width="0.9"/>
 <rect x="72.5" y="669.5" width="56" height="47.5" rx="3" fill="url(#lbl)" stroke="#a8b4bc" stroke-width="1"/>
</svg>
<div class="t" style="left:78px;top:678px;font-size:18px;color:#111">50,69</div>
<div class="t" style="left:78.5px;top:699px;font-size:11px;color:#111">par jour</div>
<div class="t" style="left:333px;top:517px;font-size:16px;color:#111">Performance brute</div>
<div class="a" style="left:467px;top:511px;width:135px;height:27px;border-radius:4px;background:#fff;border:1px solid #8e9ba2"></div>
<div class="t" style="left:472px;top:517px;font-size:16px;color:#111">Transactions</div>
<div class="a" style="left:578px;top:514px;width:21px;height:21px;border-radius:2px;background:linear-gradient(#e4f6fa,#c6dae3)"></div>
<svg style="left:0;top:0" width="813" height="842">
 <path d="M583 521.5 H594.5 L588.75 527.8 Z" fill="#000"/>
</svg>
<div class="a" style="left:604px;top:514px;width:19px;height:19px;border-radius:3px;background:linear-gradient(#fdfefe,#e4eaee);border:1px solid #8e9ba2"></div>
<svg style="left:0;top:0" width="813" height="842">
 <path d="M612.4 523.2 V517.9 L613 517.3 H616.8 V519.8 H619.7 V523 L618.6 524.4 H614.6 L609.9 529.1 Q608.6 530.3 607.6 529.3 Q606.7 528.3 607.9 527.1 Z" fill="#fff" stroke="#111" stroke-width="1.25" stroke-linejoin="round"/>
</svg>
<svg style="left:0;top:0" width="813" height="842">
<rect x="172" y="552" width="559" height="165" fill="#b8e3c3"/>
<rect x="172" y="717" width="559" height="52" fill="#e2eaf1"/>
<line x1="172" y1="570.5" x2="731" y2="570.5" stroke="#9fccab" stroke-width="1"/>
<line x1="172" y1="607.5" x2="731" y2="607.5" stroke="#9fccab" stroke-width="1"/>
<line x1="172" y1="644.5" x2="731" y2="644.5" stroke="#9fccab" stroke-width="1"/>
<line x1="172" y1="680.5" x2="731" y2="680.5" stroke="#9fccab" stroke-width="1"/>
<line x1="427.5" y1="552" x2="427.5" y2="717" stroke="#9fccab" stroke-width="1"/>
<line x1="427.5" y1="717" x2="427.5" y2="769" stroke="#c2ccd2" stroke-width="1"/>
<line x1="683.5" y1="552" x2="683.5" y2="717" stroke="#9fccab" stroke-width="1"/>
<line x1="683.5" y1="717" x2="683.5" y2="769" stroke="#c2ccd2" stroke-width="1"/>
<line x1="172" y1="717.5" x2="731" y2="717.5" stroke="#40cc40" stroke-width="1" stroke-dasharray="3.6 3.9"/>
<line x1="172" y1="754.5" x2="731" y2="754.5" stroke="#2a2ad0" stroke-width="1.2"/>
<path d="M172.5 717 V552.5 H731.5 V717" fill="none" stroke="#7fae8e" stroke-width="1"/>
<path d="M172.5 717 V769.5 H731.5 V717" fill="none" stroke="#95a5ad" stroke-width="1"/>
<line x1="172.5" y1="754.5" x2="427.5" y2="570.3" stroke="#1e2c96" stroke-width="1.1"/>
<circle cx="427.5" cy="570.3" r="3" fill="#e4ecf2" stroke="#1c2a88" stroke-width="1.4"/>
<line x1="733" y1="569.5" x2="737" y2="569.5" stroke="#8a959b" stroke-width="1"/>
<line x1="733" y1="606.5" x2="737" y2="606.5" stroke="#8a959b" stroke-width="1"/>
<line x1="733" y1="643.5" x2="737" y2="643.5" stroke="#8a959b" stroke-width="1"/>
<line x1="733" y1="679.5" x2="737" y2="679.5" stroke="#8a959b" stroke-width="1"/>
<line x1="733" y1="716.5" x2="737" y2="716.5" stroke="#8a959b" stroke-width="1"/>
<line x1="733" y1="753.5" x2="737" y2="753.5" stroke="#8a959b" stroke-width="1"/>
<line x1="426.5" y1="771" x2="426.5" y2="774.5" stroke="#8a959b" stroke-width="1"/>
<line x1="682.5" y1="771" x2="682.5" y2="774.5" stroke="#8a959b" stroke-width="1"/>
</svg>
<div class="t" style="left:175px;top:553px;font-size:11px;color:#111">Horizontal: <b>Transactions</b>, Vertical: <b>Devise (€)</b>, Transactions: <b style="color:#1a2a9a">1</b> / <b>0</b> / <b style="color:#c01010">0</b></div>
<div class="t" style="left:174.3px;top:758px;font-size:11px;color:#111">© IT-Finance.com</div>
<div class="a" style="left:737px;top:561px;width:17px;height:16px;background:linear-gradient(#ffe43a,#f2b800);border:1px solid #8e9aa2"></div>
<div class="t" style="left:738.6px;top:564px;font-size:11px;color:#111">50</div>
<div class="t" style="left:738.6px;top:600px;font-size:11px;color:#111">40</div>
<div class="t" style="left:738.6px;top:637px;font-size:11px;color:#111">30</div>
<div class="t" style="left:738.6px;top:673px;font-size:11px;color:#111">20</div>
<div class="a" style="left:737px;top:708px;width:17px;height:16px;background:linear-gradient(#e8eff3,#c4d2d9);border:1px solid #8e9aa2"></div>
<div class="t" style="left:738.6px;top:711px;font-size:11px;color:#56cc56">10</div>
<div class="t" style="left:738.6px;top:748px;font-size:11px;color:#111"><b>0</b></div>
<div class="t" style="left:275.5px;width:300px;text-align:center;top:776px;font-size:11px;color:#111">1</div>
<div class="t" style="left:532px;width:300px;text-align:center;top:776px;font-size:11px;color:#111">2</div>
<!-- /lower -->
<!-- footer -->
<div class="a" style="left:2px;top:820px;width:810px;height:1px;background:#8e9ea5"></div>
<div class="a" style="left:2px;top:821px;width:810px;height:16px;background:linear-gradient(#fafdfe 0,#fafdfe 1px,#d6e4ea 2px,#f5fafb)"></div>
<div class="a" style="left:0;top:841px;width:813px;height:1px;background:#2a1a1e"></div>
<div class="t" style="left:5px;top:823.5px;font-size:11px;word-spacing:0.43px">Les statistiques ci-dessus sont relatives au passé. Les performances passées ne présagent pas de l'avenir.</div>

</body></html>
